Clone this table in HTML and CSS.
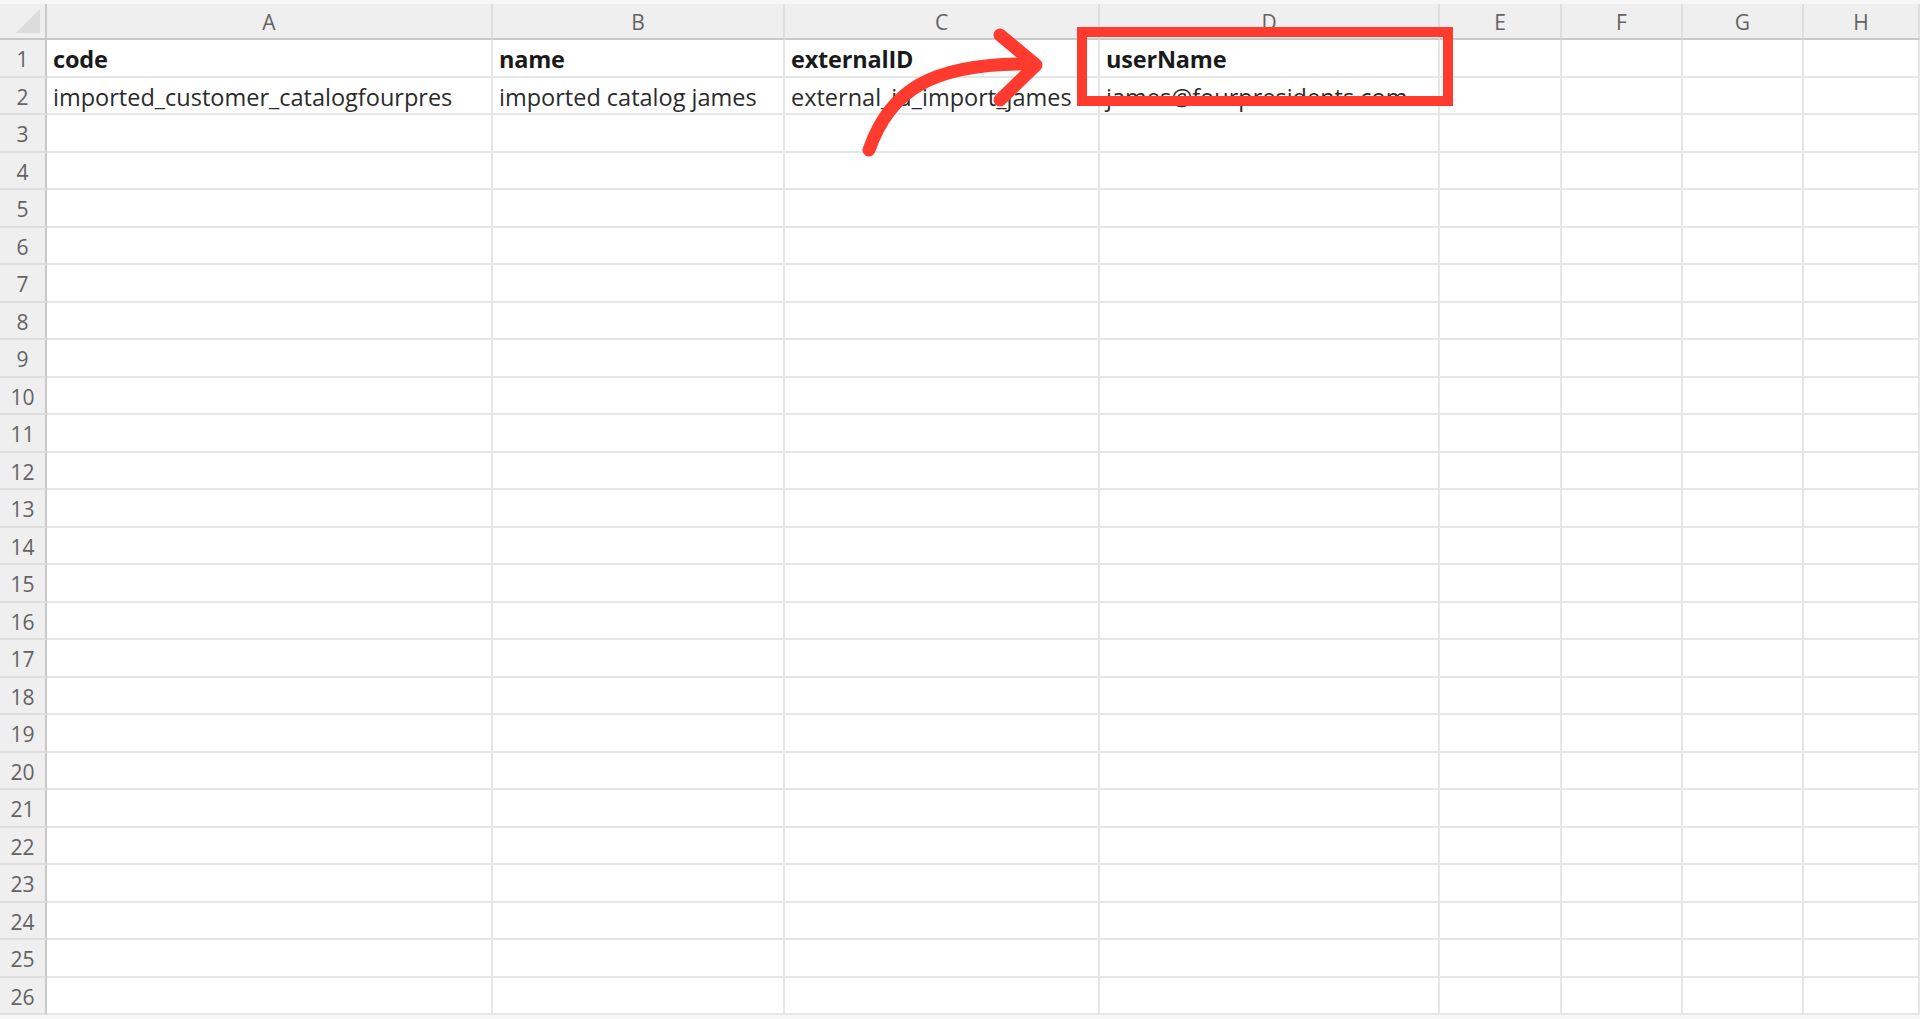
FILE: index.html
```html
<!DOCTYPE html>
<html lang="en">
<head>
    <meta charset="UTF-8">
    <title>Catalog import sheet</title>
    <link rel="stylesheet" href="styles.css">
</head>
<body>

    <div class="page">
        <div class="sheet" id="sheet">
            <!-- column headers -->
            <div class="corner"><span class="corner-mark"></span></div>
            <div class="col-head">A</div>
            <div class="col-head">B</div>
            <div class="col-head">C</div>
            <div class="col-head">D</div>
            <div class="col-head">E</div>
            <div class="col-head">F</div>
            <div class="col-head">G</div>
            <div class="col-head">H</div>
        </div>

        <!-- annotation drawn on top of the grid -->
        <svg class="markup" width="1920" height="1019" viewBox="0 0 1920 1019">
            <rect x="1082" y="32" width="366" height="69" fill="none" stroke="#ff3a2e" stroke-width="10"/>
            <path d="M869 150 C889 92 930 62 1033 64" fill="none" stroke="#ff3a2e" stroke-width="13" stroke-linecap="round"/>
            <path d="M1000 35 L1036 65 L1000 100" fill="none" stroke="#ff3a2e" stroke-width="13" stroke-linecap="round" stroke-linejoin="round"/>
        </svg>
    </div>

    <script>
        const rows = [
            ["code", "name", "externalID", "userName"],
            ["imported_customer_catalogfourpres", "imported catalog james", "external_id_import_james", "james@fourpresidents.com"]
        ];
        const sheet = document.getElementById("sheet");

        for (let r = 1; r <= 26; r++) {
            const head = document.createElement("div");
            head.className = "row-head";
            head.textContent = r;
            sheet.appendChild(head);

            for (let c = 0; c < 8; c++) {
                const cell = document.createElement("div");
                cell.className = r === 1 ? "cell cell-bold" : "cell";
                const data = rows[r - 1];
                if (data && data[c]) cell.textContent = data[c];
                sheet.appendChild(cell);
            }
        }
    </script>

</body>
</html>
```

FILE: styles.css
```css
:root {
    --head-bg: #efefef;
    --head-line: #c9c9c9;
    --grid-line: #e6e6e6;
    --head-text: #636363;
    --cell-text: #2b2b2b;
}

* {
    margin: 0;
    padding: 0;
    box-sizing: border-box;
}

body {
    background: white;
    font-family: "Open Sans", "Liberation Sans", sans-serif;
    overflow: hidden;
}

.page {
    position: relative;
    height: 1019px;
    padding-top: 4px;
    background: #f7f7f7;
    overflow: hidden;
}

.sheet {
    display: grid;
    grid-template-columns: 47px 446px 292px 315px 340px 122px 121px 121px 1fr;
    grid-template-rows: 36px repeat(26, 37.5px);
    background: white;
}

.corner,
.col-head {
    background: var(--head-bg);
    border-bottom: 2px solid var(--head-line);
}

.corner {
    position: relative;
    border-right: 2px solid var(--head-line);
}

.corner-mark {
    position: absolute;
    right: 5px;
    bottom: 5px;
    width: 0;
    height: 0;
    border-left: 24px solid transparent;
    border-bottom: 24px solid #dcdcdc;
}

.col-head {
    display: flex;
    justify-content: center;
    align-items: center;
    padding-top: 2px;
    color: var(--head-text);
    font-size: 21px;
    border-right: 2px solid #dedede;
}

.row-head {
    display: flex;
    justify-content: center;
    align-items: center;
    padding-top: 3px;
    background: var(--head-bg);
    color: var(--head-text);
    font-size: 21px;
    border-right: 2px solid var(--head-line);
    border-bottom: 2px solid #dedede;
}

.cell {
    display: flex;
    align-items: center;
    padding: 3px 6px 0;
    color: var(--cell-text);
    font-size: 23.5px;
    white-space: nowrap;
    overflow: hidden;
    border-right: 2px solid var(--grid-line);
    border-bottom: 2px solid var(--grid-line);
}

.cell-bold {
    font-weight: 700;
    letter-spacing: -0.2px;
    color: #1a1a1a;
}

.markup {
    position: absolute;
    top: 0;
    left: 0;
    pointer-events: none;
}
```
